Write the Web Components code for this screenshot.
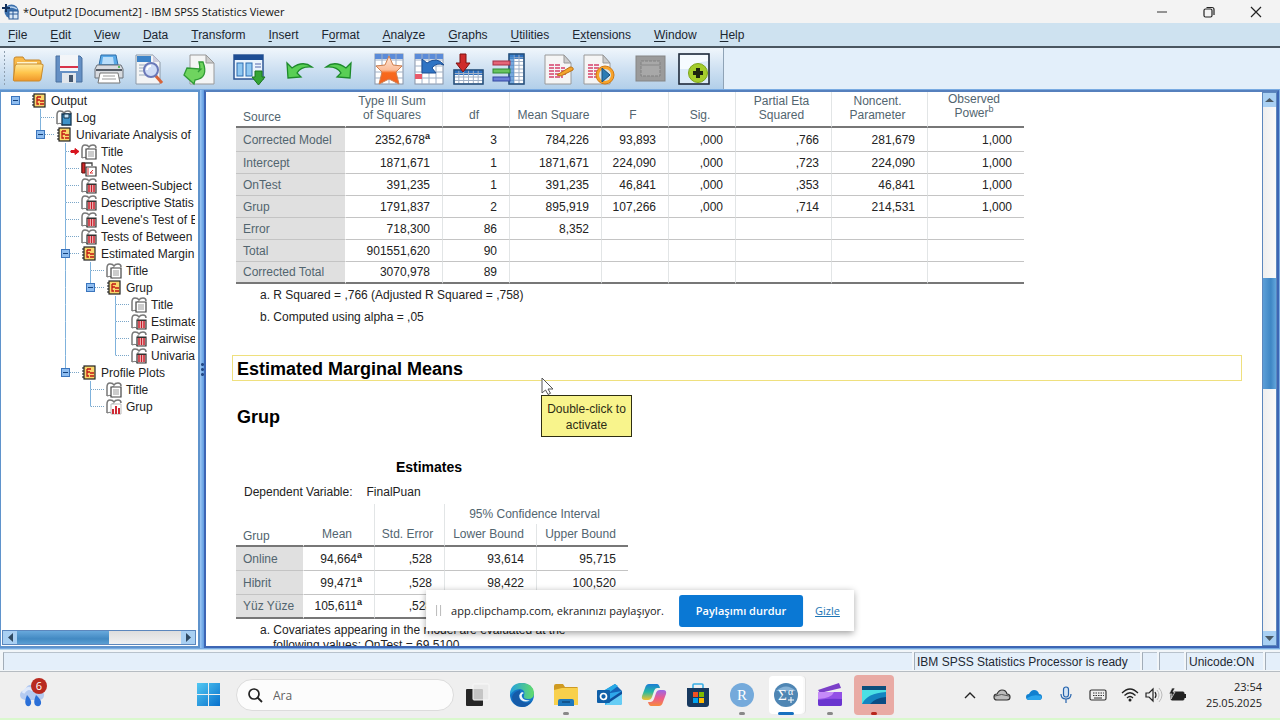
<!DOCTYPE html>
<html lang="tr">
<head>
<meta charset="utf-8">
<title>*Output2 [Document2] - IBM SPSS Statistics Viewer</title>
<style>
  html, body { margin: 0; height: 100%; }
  body { font-family: "Liberation Sans", Arial, sans-serif; font-size: 12px; color: #222; overflow: hidden; }
</style>
</head>
<body>
<spss-app></spss-app>

<script>
const GRID = (x, y, w, h, nx, ny, head) => {
  let s = `<rect x="${x}" y="${y}" width="${w}" height="${h}" fill="#fff" stroke="#8794a8"/>`;
  s += `<rect x="${x}" y="${y}" width="${w}" height="5" fill="${head}"/>`;
  for (let i = 1; i < nx; i++) s += `<path d="M${x + i * w / nx} ${y}v${h}" stroke="#9fb0c6"/>`;
  for (let i = 1; i < ny; i++) s += `<path d="M${x} ${y + i * h / ny}h${w}" stroke="#9fb0c6"/>`;
  return s;
};
const PAGE = `<path d="M2 2h19l7 8v21H2z" fill="#f5f5f5" stroke="#9a9a9a"/><path d="M21 2v8h7z" fill="#ccc" stroke="#999"/>`;
const CODE = `<path d="M6 12h12M6 15h16M6 18h15M6 21h17M6 24h14" stroke="#d6406a" stroke-width="1.600" stroke-dasharray="5 1"/>`;
const BOOK = `<path d="M1 14V5q0-4 3-4t4 2q1-2 4-2t3 3" fill="#fff" stroke="#777" stroke-width="1.500"/><path d="M1 14q3-2 6 1V4" fill="none" stroke="#777"/>`;

/* name: [width, height, viewBox, markup] */
const ICONS = {
  app: [17, 17, '0 0 17 17', `<circle cx="9.500" cy="8.500" r="7" fill="#3b70ad"/><path d="M4 6q5-4 11 0" stroke="#b8d3ee" fill="none" stroke-width="1.500"/><rect x="7" y="8" width="9" height="8" fill="#dbe9f7" stroke="#2a5b98"/><path d="M7 11h9M11 8v8" stroke="#2a5b98"/><path d="M4 1v8M0 5h8" stroke="#12305c" stroke-width="2"/>`],
  min: [12, 12, '0 0 12 12', `<path d="M1 6h10" stroke="#333"/>`],
  restore: [12, 12, '0 0 12 12', `<rect x="1" y="3" width="8" height="8" rx="1.500" fill="none" stroke="#222" stroke-width="1.200"/><path d="M3.500 1.500H9q2 0 2 2V9" fill="none" stroke="#222" stroke-width="1.200"/>`],
  close: [12, 12, '0 0 12 12', `<path d="M1 1l10 10M11 1L1 11" stroke="#222" stroke-width="1.200"/>`],
  open: [34, 32, '0 0 34 32', `<path d="M2 27V6q0-2 2-2h7l2 3h14q2 0 2 2v4" fill="#f8b94a" stroke="#c4862c"/><path d="M5 9h20v6H5z" fill="#fff4cf"/><path d="M2 28q-1 0-.5-3L3 13q.5-2 2-2h24q3 0 2 2l-2 13q-.5 2-2 2z" fill="url(#a)" stroke="#c88a2c"/><defs><linearGradient id="a" x2="0" y2="1"><stop stop-color="#ffe9a0"/><stop offset=".5" stop-color="#ffc64d"/><stop offset="1" stop-color="#f0962a"/></linearGradient></defs>`],
  save: [30, 30, '0 0 30 30', `<path d="M2 2h24l2 2v24H2z" fill="#648fc4" stroke="#4a719f"/><rect x="6" y="1" width="18" height="16" fill="#f3f5f8"/><path d="M6 13h18" stroke="#d8334a" stroke-width="2"/><rect x="8" y="19" width="14" height="10" fill="#e1e6ec"/><rect x="15" y="21" width="4" height="7" fill="#44566e"/>`],
  print: [32, 32, '0 0 32 32', `<path d="M8 2h15l2 10H6z" fill="#58a9e8" stroke="#2c6da8"/><path d="M10 4h10l1 7H9z" fill="#b9defa"/><path d="M4 12h24l2 4v9H2v-9z" fill="#d8dbe0" stroke="#6b7078"/><path d="M3 17h26" stroke="#555c66" stroke-width="2"/><path d="M7 20h18l2 10H5z" fill="#fff" stroke="#777"/><path d="M10 23h12M9 26h14" stroke="#999"/><circle cx="26" cy="14" r="1" fill="#3a3"/>`],
  preview: [32, 32, '0 0 32 32', `<path d="M3 2h17l7 7v22H3z" fill="#f3f4f5" stroke="#8c99a8"/><path d="M4 3h14v6H4z" fill="#3c83c8"/><path d="M20 2v7h7z" fill="#ccd"/><path d="M6 12h7M6 15h5M6 18h5M6 22h6" stroke="#9ab"/><path d="M22 22l7 8" stroke="#d8643a" stroke-width="3"/><circle cx="18" cy="17" r="7" fill="#cfdcf6" stroke="#6a78b8" stroke-width="2"/><path d="M14 17q0-4 4-4" stroke="#fff" stroke-width="2" fill="none"/>`],
  export: [34, 32, '0 0 34 32', `<path d="M8 2h16l8 8v21H8z" fill="#f4f5f5" stroke="#999"/><path d="M24 2v8h8z" fill="#ccc" stroke="#999"/><path d="M17 9h4q6 16-8 18l-1 4L2 22l3-7 14 1-3 3q3-2 1-10z" fill="#6fd45f" stroke="#2f9a35" stroke-width="1.300"/>`],
  dialog: [32, 32, '0 0 32 32', `<rect x="1" y="2" width="29" height="24" fill="#eaf4fd" stroke="#2c5594" stroke-width="1.500"/><rect x="1" y="2" width="29" height="5" fill="#1d4d94"/><rect x="4" y="10" width="6" height="13" fill="#8fc8f2" stroke="#2d6cb0"/><rect x="13" y="10" width="6" height="13" fill="#8fc8f2" stroke="#2d6cb0"/><path d="M22 11h6M22 14h6" stroke="#56a"/><path d="M22 18h7v6h3l-6.500 8L19 24h3z" fill="#35a535" stroke="#1b761f"/>`],
  undo: [28, 24, '0 0 28 24', `<path d="M2 6l1 15 13-1-4-4q4-7 15-6Q18 3 7 11z" fill="#59cf55" stroke="#1d8a2b" stroke-width="1.300"/>`],
  redo: [28, 24, '0 0 28 24', `<path d="M26 6l-1 15-13-1 4-4q-4-7-15-6Q10 3 21 11z" fill="#59cf55" stroke="#1d8a2b" stroke-width="1.300"/>`],
  star: [32, 32, '0 0 32 32', GRID(2, 1, 28, 30, 4, 5, '#5b8bd8') + `<path d="M16 3l4 9 9 1-6 6 3 12-10-5-10 5 3-12-6-6 9-1z" fill="url(#s)" stroke="#d08050"/><defs><linearGradient id="s" x2="0" y2="1"><stop stop-color="#ffe8da"/><stop offset=".5" stop-color="#fbbc98"/><stop offset=".6" stop-color="#f86a1c"/><stop offset="1" stop-color="#f4601f"/></linearGradient></defs>`],
  goto: [32, 32, '0 0 32 32', GRID(2, 1, 28, 30, 4, 5, '#5b8bd8') + `<rect x="2" y="21" width="7" height="5" fill="#e85a6a"/><path d="M9 6v14h14l-4-5q4-6 12-3Q24 3 14 10z" fill="#2f74c4" stroke="#1d4f94"/>`],
  insertcase: [32, 32, '0 0 32 32', GRID(1, 17, 29, 14, 6, 4, '#2d6fbe') + `<rect x="1" y="17" width="29" height="14" fill="none" stroke="#25507e" stroke-width="1.500"/><path d="M7 1h6v9h4l-7 9-7-9h4z" fill="#cf2b2b" stroke="#7d1313"/>`],
  insertvar: [34, 32, '0 0 34 32', GRID(17, 1, 15, 30, 3, 8, '#2d6fbe') + `<rect x="17" y="1" width="5" height="30" fill="#3f86cf" opacity=".7"/><rect x="17" y="1" width="15" height="30" fill="none" stroke="#25507e" stroke-width="1.500"/><rect x="1" y="8" width="17" height="4" fill="#e56578" stroke="#a32f45"/><rect x="1" y="16" width="17" height="4" fill="#67c35f" stroke="#2f8a35"/><rect x="1" y="24" width="17" height="4" fill="#6a7fd8" stroke="#33489f"/>`],
  script: [32, 32, '0 0 32 32', PAGE + CODE + `<path d="M14 22l13-8q4 0 3 3l-12 6z" fill="#f4a52c" stroke="#b87016"/>`],
  runscript: [34, 32, '0 0 34 32', PAGE + CODE + `<circle cx="23" cy="22" r="9" fill="#f7a32b" stroke="#cf7a14"/><circle cx="23" cy="22" r="6" fill="#cfe3ee"/><path d="M20 15l8 7-8 7z" fill="#2c7cb4" stroke="#1b4f7b"/>`],
  pane: [32, 28, '0 0 32 28', `<rect x="1" y="1" width="29" height="25" fill="#9b9b9b" stroke="#858585"/><rect x="6" y="6" width="19" height="15" fill="#a8a8a8" stroke="#818181" stroke-dasharray="3 1"/><path d="M6 10h19" stroke="#888"/>`],
  addpane: [34, 34, '0 0 34 34', `<rect x="2" y="2" width="30" height="30" fill="#dcebf8" stroke="#1f2a3a" stroke-width="1.600"/><path d="M3 3h28v6q-14 1-20 8H3z" fill="#f6fbff"/><circle cx="21" cy="21" r="9.500" fill="#a4cd2b" stroke="#7ea51b"/><path d="M21 16v10M16 21h10" stroke="#1c2410" stroke-width="4"/>`],
  folder: [16, 16, '0 0 16 16', `<rect x="3" y="1" width="11" height="13" fill="#f9d66c" stroke="#222" stroke-width="1.200"/><path d="M3 3H1M3 6H1M3 9H1M3 12H1" stroke="#111"/><path d="M6 4h4M6 4v7h2M6 7h3M9 8h4M9 11h4" stroke="#c01616" stroke-width="1.300" fill="none"/>`],
  log: [16, 16, '0 0 16 16', BOOK + `<path d="M6 4h9v11H6z" fill="#3e93c9" stroke="#14344e" stroke-width="1.300"/><path d="M8 4h5v4H8z" fill="#c7e5f7" stroke="#14344e"/>`],
  title: [16, 16, '0 0 16 16', BOOK + `<path d="M5 5h10v10H5z" fill="#fff" stroke="#444" stroke-width="1.200"/><path d="M7 8h6M7 10h6M7 12h6" stroke="#999"/>`],
  notes: [16, 16, '0 0 16 16', `<path d="M1 12V2h10v3" fill="#fff" stroke="#444" stroke-width="1.300"/><path d="M1 2v10h3V2z" fill="#d32a2a" stroke="#611"/><path d="M5 6h10v9H5z" fill="#fff" stroke="#333" stroke-width="1.200"/><path d="M7 7v7M9 12l3-3M9 12h3" stroke="#d33" fill="none"/>`],
  table: [16, 16, '0 0 16 16', BOOK + `<path d="M6 6h9v9H6z" fill="#f4dada" stroke="#333" stroke-width="1.200"/><path d="M8 7v7M10.500 7v7M13 7v7" stroke="#c81e2a" stroke-width="1.500"/><path d="M6 6h9v1H6z" fill="#333"/>`],
  chart: [16, 16, '0 0 16 16', BOOK + `<path d="M5 5h10v10H5z" fill="#fff" stroke="#bbb"/><path d="M7 15v-5M10 15V7M13 15V9" stroke="#cf2a35" stroke-width="2"/>`],
  weather: [28, 28, '0 0 28 28', `<path d="M6 20q-5-1-5-5t5-5q2-6 8-5 6 0 7 6 5 1 4 5t-5 4z" fill="#b4caf0"/><path d="M4 13q4-7 10-3" stroke="#dfe9fb" stroke-width="3" fill="none"/><path d="M8 15q5 5 4 9-2 4-5 1-2-3 1-10zM17 15q6 5 5 9-2 4-6 1-2-3 1-10z" fill="#2b70d8"/>`],
  windows: [24, 24, '0 0 24 24', `<defs><linearGradient id="w" x2="1" y2="1"><stop stop-color="#52c8f2"/><stop offset="1" stop-color="#0870cc"/></linearGradient></defs><path d="M0 0h11v11H0zM12 0h11v11H12zM0 12h11v11H0zM12 12h11v11H12z" fill="url(#w)"/>`],
  search: [16, 16, '0 0 16 16', `<circle cx="7" cy="7" r="5" fill="none" stroke="#222" stroke-width="1.700"/><path d="M10.500 10.500l4.500 4.500" stroke="#222" stroke-width="1.800"/>`],
  taskview: [26, 24, '0 0 26 24', `<rect x="1" y="6" width="17" height="17" rx="1" fill="#262626"/><rect x="8" y="1" width="16" height="16" rx="1" fill="#e9e9e9" opacity=".82"/><rect x="8" y="1" width="16" height="16" rx="1" fill="none" stroke="#f8f8f8"/>`],
  edge: [26, 26, '0 0 26 26', `<defs><linearGradient id="e" x2="1"><stop stop-color="#249fe0"/><stop offset="1" stop-color="#62dc6a"/></linearGradient></defs><circle cx="13" cy="13" r="12" fill="#1476c8"/><path d="M1 13Q1 1 13 1q11 0 12 10 0 6-6 6-5 0-4-3 2-6-4-7-6 0-10 6z" fill="url(#e)"/><path d="M11 11q-3 6 3 9 5 2 9-1-4 6-10 6Q3 24 3 15q1-5 8-7z" fill="#165ba8"/><path d="M15 11q-3 1-2 4 2 4 8 3-4 3-9 0-4-5 1-8z" fill="#eef6fb"/>`],
  explorer: [26, 26, '0 0 26 26', `<path d="M1 4q0-2 2-2h7l2 3h12q1 0 1 2v16H1z" fill="#cf9a22"/><path d="M1 8l8-2h16v17H1z" fill="#f8d04c"/><path d="M5 24v-5q0-2 2-2h12q2 0 2 2v5z" fill="#1d77bd"/><path d="M9 20h8" stroke="#0e4a80" stroke-width="1.500"/>`],
  outlook: [26, 24, '0 0 26 24', `<path d="M5 9l13-8 7 7-12 9z" fill="#1565b8"/><path d="M6 8L18 1l3 2-12 9z" fill="#27a9e6"/><path d="M8 22V11l17-3v12q0 2-2 2z" fill="#2fa8ea"/><path d="M8 22L25 9v11q0 2-2 2z" fill="#66cdf5"/><path d="M13 16l12-8v3l-12 8z" fill="#0f4f9c"/><rect x="0" y="7" width="13" height="13" rx="1" fill="#0f5fa8"/><circle cx="6.500" cy="13.500" r="3" fill="none" stroke="#fff" stroke-width="1.700"/>`],
  copilot: [26, 26, '0 0 26 26', `<defs><linearGradient id="c" x2="0" y2="1"><stop stop-color="#1c7ed6"/><stop offset=".5" stop-color="#27b9a3"/><stop offset="1" stop-color="#f4c22c"/></linearGradient><linearGradient id="d" x2="0" y2="1"><stop stop-color="#9a67e8"/><stop offset=".5" stop-color="#ec5b8e"/><stop offset="1" stop-color="#f68a3c"/></linearGradient></defs><path d="M8 2h8q2 0 3 4h-3q-2 0-3 3l-2 6q-1 3-4 3H4q-4 0-3-4l3-8q1-4 4-4z" fill="url(#c)"/><path d="M18 24h-8q-2 0-3-4h3q2 0 3-3l2-6q1-3 4-3h3q4 0 3 4l-3 8q-1 4-4 4z" fill="url(#d)"/>`],
  store: [26, 26, '0 0 26 26', `<path d="M8 6V3q0-1 1-1h8q1 0 1 1v3" fill="none" stroke="#39aee5" stroke-width="1.600"/><path d="M2 6h22v16q0 3-3 3H5q-3 0-3-3z" fill="#17395f"/><path d="M8 10h5v5H8z" fill="#f25022"/><path d="M14 10h5v5h-5z" fill="#7fba00"/><path d="M8 16h5v5H8z" fill="#00a4ef"/><path d="M14 16h5v5h-5z" fill="#ffb900"/>`],
  rstudio: [26, 26, '0 0 26 26', `<circle cx="13" cy="13" r="12" fill="#75aadb"/><text x="13" y="18" text-anchor="middle" font-family="Liberation Serif, serif" font-size="15" fill="#fff">R</text>`],
  spss: [26, 26, '0 0 26 26', `<circle cx="13" cy="13" r="12" fill="#4f86b4"/><path d="M3 9q10-9 20 0" fill="#86b2d6"/><text x="5" y="18" font-family="Liberation Serif, serif" font-size="15" fill="#fff">Σ</text><text x="15" y="13" font-family="Liberation Serif, serif" font-size="10" fill="#fff">α</text><path d="M18 15v6M15 18h6" stroke="#fff"/>`],
  clip: [26, 26, '0 0 26 26', `<path d="M1 8L22 1l2 5L3 11z" fill="#7b3fc8"/><path d="M1 10h24v12q0 2-2 2H3q-2 0-2-2z" fill="#9350e6"/><path d="M1 10h16q-2 6-16 7z" fill="#c58af8"/><path d="M1 18q12-2 24-1v5q0 2-2 2H3q-2 0-2-2z" fill="#6a35cf"/>`],
  recorder: [26, 22, '0 0 26 22', `<rect x="1" y="2" width="24" height="18" fill="#4be0e4"/><path d="M1 2h24v4H1z" fill="#0d4e7c"/><path d="M1 20q5-11 24-12v12z" fill="#1484c0"/><path d="M9 20q5-6 16-7v7z" fill="#0b4c84"/>`],
  chevron: [14, 14, '0 0 14 14', `<path d="M2 10l5-5 5 5" fill="none" stroke="#222" stroke-width="1.400"/>`],
  cloud: [18, 14, '0 0 18 14', `<path d="M4 12Q1 12 1 9t3-3q2-4 5-4 4 0 5 4 3 0 3 3t-3 3z" fill="#bdbdbd" stroke="#333" stroke-width="1.200"/><path d="M2 8q6-3 14 0" stroke="#555" fill="none"/>`],
  onedrive: [18, 14, '0 0 18 14', `<path d="M4 12Q1 12 1 9t3-3q2-4 5-4 4 0 5 4 3 0 3 3t-3 3z" fill="#1180d0"/><path d="M2 10q6-4 14-2 1 4-2 4H4q-2 0-2-2z" fill="#2ba4ec"/>`],
  mic: [14, 18, '0 0 14 18', `<rect x="4.500" y="1" width="5" height="10" rx="2.500" fill="#d4e4f5" stroke="#2563ad" stroke-width="1.200"/><path d="M2 8q0 5 5 5t5-5M7 13v4" fill="none" stroke="#2563ad" stroke-width="1.200"/>`],
  keyboard: [18, 14, '0 0 18 14', `<rect x="1" y="2" width="16" height="10" rx="1.500" fill="none" stroke="#333" stroke-width="1.200"/><path d="M4 5h11M4 7.500h11" stroke="#333" stroke-dasharray="1.500 1"/><path d="M5 10h8" stroke="#333"/>`],
  wifi: [18, 16, '0 0 18 16', `<path d="M1 6q8-8 16 0M3.500 8.500q5.500-5.500 11 0M6 11q3-3 6 0" fill="none" stroke="#222" stroke-width="1.300"/><circle cx="9" cy="13" r="1.500" fill="#222"/>`],
  volume: [18, 16, '0 0 18 16', `<path d="M1 6h3l4-4v12l-4-4H1z" fill="none" stroke="#222" stroke-width="1.200"/><path d="M10 5q2 3 0 6" fill="none" stroke="#222" stroke-width="1.200"/><path d="M12 3q4 5 0 10M14 1q6 7 0 14" fill="none" stroke="#bbb"/>`],
  battery: [18, 14, '0 0 18 14', `<rect x="2" y="4" width="13" height="8" rx="1" fill="#222" stroke="#222"/><path d="M16 6v4" stroke="#222" stroke-width="2"/><path d="M3 0L0 6h3l-1 5 4-7H4l2-4z" fill="#222" stroke="#eee" stroke-width=".7"/>`],
  pointer: [13, 18, '0 0 13 18', `<path d="M1 1v15l3.500-3 2.500 4.500 2.500-1.200L7 12h5z" fill="#fff" stroke="#555"/>`],
  left: [7, 9, '0 0 7 9', `<path d="M6 0v9L1 4.500z" fill="#2f4a63"/>`],
  right: [7, 9, '0 0 7 9', `<path d="M1 0v9l5-4.500z" fill="#2f4a63"/>`],
  up: [9, 7, '0 0 9 7', `<path d="M0 5h9L4.500 1z" fill="#4a5a66"/>`],
  down: [9, 7, '0 0 9 7', `<path d="M0 1h9L4.500 6z" fill="#4a5a66"/>`]
};

class Base extends HTMLElement {
  constructor() {
    super();
    this.attachShadow({ mode: 'open' });
  }
  connectedCallback() {
    this.shadowRoot.innerHTML = `<style>*{box-sizing:border-box}button{font:inherit;color:inherit;background:none;border:0;padding:0;margin:0}${this.css()}</style>${this.html()}`;
  }
}

customElements.define('app-icon', class extends Base {
  css() { return `:host{display:inline-flex;flex:none}svg{display:block;overflow:visible}`; }
  html() {
    const [w, h, box, body] = ICONS[this.getAttribute('name')];
    return `<svg width="${w}" height="${h}" viewBox="${box}" aria-hidden="true">${body}</svg>`;
  }
});

customElements.define('title-bar', class extends Base {
  css() { return `
    :host{display:flex;align-items:center;height:23px;background:#f3f3f3;padding:0 1px 0 2px;font-family:"Open Sans","Noto Sans",sans-serif;font-size:11px;color:#111}
    span{flex:1;padding-left:4px}
    button{width:47px;height:23px;display:grid;place-items:center}`; }
  html() { return `<app-icon name="app"></app-icon><span><slot></slot></span>
    <button aria-label="Minimize"><app-icon name="min"></app-icon></button>
    <button aria-label="Restore"><app-icon name="restore"></app-icon></button>
    <button aria-label="Close"><app-icon name="close"></app-icon></button>`; }
});

customElements.define('menu-bar', class extends Base {
  css() { return `
    :host{display:block;background:#cee2f0;border-bottom:2px solid #4a5660;height:25px}
    nav{display:flex;gap:23px;padding-left:8px;height:23px;align-items:center;color:#1c2630}
    u{text-underline-offset:2px}`; }
  html() {
    const items = ['_File', '_Edit', '_View', '_Data', '_Transform', '_Insert', 'F_ormat', '_Analyze', '_Graphs', '_Utilities', 'E_xtensions', '_Window', '_Help'];
    return `<nav>${items.map(t => `<button>${t.replace(/_(.)/, '<u>$1</u>')}</button>`).join('')}</nav>`;
  }
});

customElements.define('tool-bar', class extends Base {
  css() { return `
    :host{display:flex;height:41px;background:#e3effa}
    .bar{display:flex;align-items:center;gap:10px;padding:0 9px 0 3px;background:linear-gradient(#f0f6fc,#cfe1f2 50%,#b2cfe9);border-right:1px solid #8fa3b6}
    .grip{width:3px;height:37px;margin-right:-7px;background:radial-gradient(circle,#8fa0b0 1px,transparent 1px) 0 0/3px 4px}
    .group{display:flex}
    button{width:40px;height:38px;display:grid;place-items:center}
    .group:last-child{gap:3px;padding-left:2px}`; }
  html() {
    const groups = [
      ['open:Open', 'save:Save', 'print:Print', 'preview:Print Preview'], ['export:Export'], ['dialog:Recall Dialogs'],
      ['undo:Undo', 'redo:Redo'], ['star:Go to Data', 'goto:Go to Case', 'insertcase:Insert Cases', 'insertvar:Variables'],
      ['script:New Script', 'runscript:Run Script'], ['pane:Select Pane', 'addpane:Designate Window']];
    return `<div class="bar"><div class="grip"></div>${groups.map(g => `<div class="group">${g.map(i => {
      const [n, l] = i.split(':');
      return `<button aria-label="${l}"><app-icon name="${n}"></app-icon></button>`;
    }).join('')}</div>`).join('')}</div>`;
  }
});

customElements.define('scroll-bar', class extends Base {
  css() { return `
    :host{display:flex;flex:none;border:1px solid #5c87bd;background:#f2f3f5}
    :host([dir-x]){height:15px}
    :host([dir-y]){width:15px;flex-direction:column}
    button{display:grid;place-items:center;background:#a9d0f3;flex:0 0 14px}
    .before{flex:var(--before,0) 0 0px}
    .thumb{flex:var(--size,1) 0 0px}
    .after{flex:var(--after,1) 0 0px}
    :host([dir-x]) .track{background:linear-gradient(#ddd,#f1f1f1)}
    :host([dir-x]) .thumb{background:linear-gradient(#68a9dc,#4289c2 60%,#5c9fd3)}
    :host([dir-y]) .thumb{background:linear-gradient(90deg,#5c9fd8,#3f86c4 60%,#62a6dc)}
    :host([dir-y]) .track{background:linear-gradient(90deg,#eee,#fafafa)}`; }
  html() {
    const x = this.hasAttribute('dir-x');
    return `<button aria-label="Scroll back"><app-icon name="${x ? 'left' : 'up'}"></app-icon></button>
      <div class="track before"></div><div class="thumb"></div><div class="track after"></div>
      <button aria-label="Scroll forward"><app-icon name="${x ? 'right' : 'down'}"></app-icon></button>`;
  }
});

customElements.define('outline-tree', class extends Base {
  css() { return `
    :host{display:flex;flex-direction:column;background:#fff;border:2px solid #5f93cc;border-width:2px 2px 2px 1px;padding:0 2px 1px 1px;min-height:0}
    .tree{flex:1;overflow:hidden;padding:0 0 0 1px;margin-right:1px;min-height:0}
    .row{display:flex;align-items:center;height:17px;white-space:nowrap;color:#222}
    .cell{flex:0 0 25px;height:17px;display:grid}
    .cell svg{overflow:visible}
    .row app-icon{margin:0 4px 0 3px}`; }
  cell(k) {
    const up = 'vbeaTE'.includes(k) && k !== ' ', down = 'vbaT'.includes(k), tog = 'tTE'.includes(k), dots = 'beaTE'.includes(k);
    let s = '';
    if (up) s += `<path d="M12.500 0v8.500" stroke="#7fb2dc"/>`;
    if (down) s += `<path d="M12.500 8.500V17" stroke="#7fb2dc"/>`;
    if (dots) s += `<path d="M13 8.500h14" stroke="#7aa6c8" stroke-dasharray="1 1"/>`;
    if (tog) s += `<rect x="8.500" y="4.500" width="8" height="8" fill="#8ebdf0" stroke="#3b75bd"/><path d="M10 8.500h5" stroke="#14427e"/>`;
    if (k === 'a') s += `<path d="M18 7.500h4v-2l4 3-4 3v-2h-4z" fill="#d8141e" stroke="#d8141e"/>`;
    return `<span class="cell"><svg width="25" height="17" aria-hidden="true">${s}</svg></span>`;
  }
  html() {
    const rows = [
      ['t', 'folder', 'Output'], [' b', 'log', 'Log'], [' E', 'folder', 'Univariate Analysis of'],
      ['  a', 'title', 'Title'], ['  b', 'notes', 'Notes'], ['  b', 'table', 'Between-Subject'],
      ['  b', 'table', 'Descriptive Statis'], ['  b', 'table', "Levene's Test of E"], ['  b', 'table', 'Tests of Between'],
      ['  T', 'folder', 'Estimated Margin'], ['  vb', 'title', 'Title'], ['  vE', 'folder', 'Grup'],
      ['  v b', 'title', 'Title'], ['  v b', 'table', 'Estimate'], ['  v b', 'table', 'Pairwise'],
      ['  v e', 'table', 'Univaria'], ['  E', 'folder', 'Profile Plots'], ['   b', 'title', 'Title'], ['   e', 'chart', 'Grup']];
    return `<div class="tree" role="tree">${rows.map(([c, i, t]) =>
      `<div class="row" role="treeitem" aria-level="${c.length}">${[...c].map(k => this.cell(k)).join('')}<app-icon name="${i}"></app-icon><span>${t}</span></div>`).join('')}</div>
      <scroll-bar dir-x style="--before:0;--size:93;--after:72"></scroll-bar>`;
  }
});

const TABLE_CSS = `
  table{table-layout:fixed;border-collapse:separate;border-spacing:0;line-height:14px;color:#222}
  th{font-weight:400;color:#52656f;padding:0 8px 0 4px;vertical-align:bottom}
  th,td{border-left:1px solid #e2e5e6}
  tr>:first-child,tr>:nth-child(2){border-left-color:transparent}
  thead .rule{border-bottom:2px solid #777}
  tbody th,thead .first{text-align:left;padding-left:7px;border-left:0}
  thead .first{padding-bottom:2px}
  tbody th{background:#e0e0e0;vertical-align:middle;white-space:nowrap}
  tbody td{text-align:right;padding:0 12px 0 0;vertical-align:middle}
  tbody th,tbody td{border-bottom:1px solid #c4c4c4}
  tbody tr:last-child>*{border-bottom:2px solid #777}
  sup{font-size:9px;line-height:0;vertical-align:5px;color:#222;font-weight:700}
  th sup{color:inherit;font-weight:400}`;

customElements.define('effects-table', class extends Base {
  css() { return `:host{display:block}${TABLE_CSS}
    table{width:788px}
    thead tr{height:36px}
    thead th{padding-bottom:4px}
    thead th.noted{padding-bottom:6px}
    tbody tr{height:22px}
    tbody tr:first-child{height:24px}`; }
  html() {
    const w = [109, 97, 67, 92, 67, 67, 96, 96, 97];
    const rows = [
      ['Corrected Model', '2352,678<sup>a</sup>', '3', '784,226', '93,893', ',000', ',766', '281,679', '1,000'],
      ['Intercept', '1871,671', '1', '1871,671', '224,090', ',000', ',723', '224,090', '1,000'],
      ['OnTest', '391,235', '1', '391,235', '46,841', ',000', ',353', '46,841', '1,000'],
      ['Grup', '1791,837', '2', '895,919', '107,266', ',000', ',714', '214,531', '1,000'],
      ['Error', '718,300', '86', '8,352', '', '', '', '', ''],
      ['Total', '901551,620', '90', '', '', '', '', '', ''],
      ['Corrected Total', '3070,978', '89', '', '', '', '', '', '']];
    const heads = ['Type III Sum<br>of Squares', 'df', 'Mean Square', 'F', 'Sig.', 'Partial Eta<br>Squared', 'Noncent.<br>Parameter'];
    return `<table><colgroup>${w.map(n => `<col style="width:${n}px">`).join('')}</colgroup>
      <thead><tr><th class="rule first">Source</th>${heads.map(h => `<th class="rule">${h}</th>`).join('')}<th class="rule noted">Observed<br>Power<sup>b</sup></th></tr></thead>
      <tbody>${rows.map(r => `<tr><th scope="row">${r[0]}</th>${r.slice(1).map(c => `<td>${c}</td>`).join('')}</tr>`).join('')}</tbody></table>`;
  }
});

customElements.define('estimates-table', class extends Base {
  css() { return `:host{display:block}${TABLE_CSS}
    table{width:392px}
    thead tr{height:20px}
    thead tr+tr{height:23px}
    thead th{padding-bottom:4px;white-space:nowrap}
    thead tr>.span{padding-bottom:3px}
    thead tr+tr>:first-child,thead tr+tr>:nth-child(2){border-left-color:#e2e5e6}
    tbody tr{height:24px}`; }
  html() {
    const rows = [['Online', '94,664', ',528', '93,614', '95,715'], ['Hibrit', '99,471', ',528', '98,422', '100,520'], ['Yüz Yüze', '105,611', ',528', '', '']];
    return `<table><colgroup>${[67, 71, 70, 92, 92].map(n => `<col style="width:${n}px">`).join('')}</colgroup>
      <thead><tr><th class="rule first" rowspan="2">Grup</th><th class="rule" rowspan="2">Mean</th><th class="rule" rowspan="2">Std. Error</th><th class="span" colspan="2">95% Confidence Interval</th></tr>
      <tr><th class="rule">Lower Bound</th><th class="rule">Upper Bound</th></tr></thead>
      <tbody>${rows.map(r => `<tr><th scope="row">${r[0]}</th><td>${r[1]}<sup>a</sup></td>${r.slice(2).map(c => `<td>${c}</td>`).join('')}</tr>`).join('')}</tbody></table>`;
  }
});

customElements.define('hover-tip', class extends Base {
  css() { return `
    :host{position:absolute;left:309px;top:22px;display:flex;flex-direction:column;align-items:flex-start}
    div{width:91px;height:42px;border:1px solid #2e2e12;background:#f8f48c;text-align:center;line-height:16px;padding-top:5px;color:#2d2c14}`; }
  html() { return `<app-icon name="pointer"></app-icon><div role="tooltip"><slot></slot></div>`; }
});

customElements.define('output-view', class extends Base {
  css() { return `
    :host{display:flex;background:#fff;border:2px solid #3d66b4;border-top-color:#5680bd;padding:0 0 0 1px;min-width:0;min-height:0}
    .page{flex:1;min-width:0;overflow:hidden;padding:0 20px 0 25px}
    .block{padding-left:4px}
    p{margin:0}
    .note{padding-left:24px;line-height:22px}
    h1,h2{font-size:18px;font-weight:700;color:#000;margin:0;line-height:24px}
    h1{border:1px solid #efe07e;height:26px;padding-left:4px;line-height:26px}
    .selected{position:relative;margin-top:27px}
    h2{margin-top:24px;padding-left:5px}
    h3{font-size:14px;line-height:24px;margin:26px 0 3px;width:386px;text-align:center;color:#000}
    .dep{line-height:20px;margin-bottom:2px;padding-left:8px;display:flex;gap:14px}
    .foot{line-height:15px;margin-top:4px;padding-left:24px}
    .foot span{display:block;padding-left:13px}`; }
  html() { return `<div class="page">
      <div class="block"><effects-table></effects-table>
        <p class="note">a. R Squared = ,766 (Adjusted R Squared = ,758)</p>
        <p class="note">b. Computed using alpha = ,05</p></div>
      <div class="selected"><h1>Estimated Marginal Means</h1><hover-tip>Double-click to activate</hover-tip></div>
      <h2>Grup</h2>
      <div class="block"><h3>Estimates</h3>
        <p class="dep"><span>Dependent Variable:</span><span>FinalPuan</span></p>
        <estimates-table></estimates-table>
        <p class="foot">a. Covariates appearing in the model are evaluated at the<span>following values: OnTest = 69,5100.</span></p></div>
    </div>
    <scroll-bar dir-y style="--before:172;--size:112;--after:244"></scroll-bar>`; }
});

customElements.define('status-bar', class extends Base {
  css() { return `
    :host{display:flex;gap:2px;height:22px;background:#f2f6f9;padding:2px 0 1px 3px;border-bottom:1px solid #b6bcc2;color:#1e2933}
    div{background:#e4effa;border-left:1px solid #a2adb8;border-top:1px solid #b8c2cc;padding-left:2px;line-height:18px;white-space:nowrap}
    .fill{flex:1}.msg{width:226px}.s{width:15px}.m{width:25px}.u{width:77px}`; }
  html() { return `<div class="fill"></div><div class="msg">IBM SPSS Statistics Processor is ready</div><div class="s"></div><div class="m"></div><div class="u">Unicode:ON</div><div class="s"></div>`; }
});

customElements.define('share-bar', class extends Base {
  css() { return `
    :host{position:absolute;left:50%;bottom:89px;transform:translateX(-50%);display:flex;align-items:center;height:41px;padding:0 14px 0 10px;background:#fff;box-shadow:0 2px 7px rgba(0,0,0,.4);font-family:"Open Sans","Noto Sans",sans-serif;font-size:11px;color:#222;white-space:nowrap}
    i{width:5px;height:11px;border:1px solid #bbb;border-width:0 1px;margin-right:10px}
    span{min-width:218px}
    button{margin:0 12px 0 10px;width:124px;height:32px;border-radius:3px;background:#0a78d4;color:#fff;font-weight:600}
    a{color:#1c74b4}`; }
  html() { return `<i></i><span>app.clipchamp.com, ekranınızı paylaşıyor.</span><button>Paylaşımı durdur</button><a href="#gizle">Gizle</a>`; }
});

customElements.define('task-bar', class extends Base {
  css() { return `
    :host{display:flex;align-items:center;height:48px;background:#efefef;border-bottom:2px solid #d9f8cd;font-family:"Open Sans","Noto Sans",sans-serif;font-size:11px;color:#222}
    .weather{flex:0 0 187px;display:flex;padding-left:19px}
    .weather button{position:relative}
    b{position:absolute;left:12px;top:-2px;width:16px;height:16px;border-radius:8px;background:#b92a20;color:#fff;font-weight:400;line-height:16px;text-align:center}
    .task{width:44px;height:46px;display:grid;place-items:center;position:relative}
    .task.run::after{content:"";position:absolute;bottom:3px;left:19px;width:6px;height:3px;border-radius:2px;background:#888}
    .task.on::after{left:14px;width:16px;background:#1770c0}
    .task.rec::after{background:#b8261c}
    .tile{display:grid;place-items:center;width:34px;height:38px;border-radius:4px}
    .on .tile{background:#fff;box-shadow:2px 0 0 #fafafa,3px 0 0 #e0e0e0}
    .rec .tile{width:40px;height:40px;background:#e9aaa4}
    label{display:flex;align-items:center;width:218px;height:32px;border-radius:16px;background:#fcfcfc;border:1px solid #dcdcdc;margin:0 2px 0 5px;padding-left:10px;gap:10px}
    input{border:0;background:none;outline:0;width:150px;padding:0;font:12px "Open Sans","Noto Sans",sans-serif}
    input::placeholder{color:#606060;opacity:1}
    .tray{margin-left:auto;display:flex;align-items:center;padding-right:18px}
    .tray button{width:32px;height:32px;display:grid;place-items:center}
    .quick{display:flex;gap:6px;padding:0 7px}
    .tray .quick button{width:18px}
    .clock{width:68px;text-align:right;line-height:16px}`; }
  html() {
    const apps = [['taskview', 'Task View'], ['edge', 'Edge'], ['explorer', 'Explorer', 'run'], ['outlook', 'Outlook'], ['copilot', 'Copilot'], ['store', 'Store'], ['rstudio', 'RStudio', 'run'], ['spss', 'SPSS', 'run on'], ['clip', 'Clipchamp', 'run'], ['recorder', 'Clipchamp Recorder', 'run rec']];
    const btn = ([n, l]) => `<button aria-label="${l}"><app-icon name="${n}"></app-icon></button>`;
    return `<div class="weather"><button aria-label="Weather"><app-icon name="weather"></app-icon><b>6</b></button></div>
      <button class="task" aria-label="Start"><app-icon name="windows"></app-icon></button>
      <label><app-icon name="search"></app-icon><input type="search" placeholder="Ara" aria-label="Ara"></label>
      ${apps.map(([n, l, c]) => `<button class="task ${c || ''}" aria-label="${l}"><span class="tile"><app-icon name="${n}"></app-icon></span></button>`).join('')}
      <div class="tray">${[['chevron', 'Hidden icons'], ['cloud', 'Cloud'], ['onedrive', 'OneDrive'], ['mic', 'Microphone'], ['keyboard', 'Keyboard']].map(btn).join('')}
        <div class="quick">${[['wifi', 'Wi-Fi'], ['volume', 'Volume'], ['battery', 'Battery']].map(btn).join('')}</div>
        <div class="clock">23:54<br>25.05.2025</div></div>`;
  }
});

customElements.define('spss-app', class extends Base {
  css() { return `
    :host{display:flex;flex-direction:column;height:100vh;position:relative;overflow:hidden}
    main{flex:1;min-height:0;display:grid;grid-template-columns:200px 4px minmax(0,1fr);background:#79abe2;padding:1px 1px 1px 0;border-bottom:1px solid #b8d8ee}
    .split{background:linear-gradient(90deg,#9cc8f4,#5e9ae0);display:grid;place-items:center}
    .split::before{content:"";width:3px;height:15px;background:radial-gradient(circle,#234a86 1px,transparent 2px) 0 0/3px 5px}`; }
  html() { return `<title-bar>*Output2 [Document2] - IBM SPSS Statistics Viewer</title-bar>
    <menu-bar></menu-bar><tool-bar></tool-bar>
    <main><outline-tree></outline-tree><div class="split"></div><output-view></output-view></main>
    <status-bar></status-bar><task-bar></task-bar><share-bar></share-bar>`; }
});
</script>
</body>
</html>
